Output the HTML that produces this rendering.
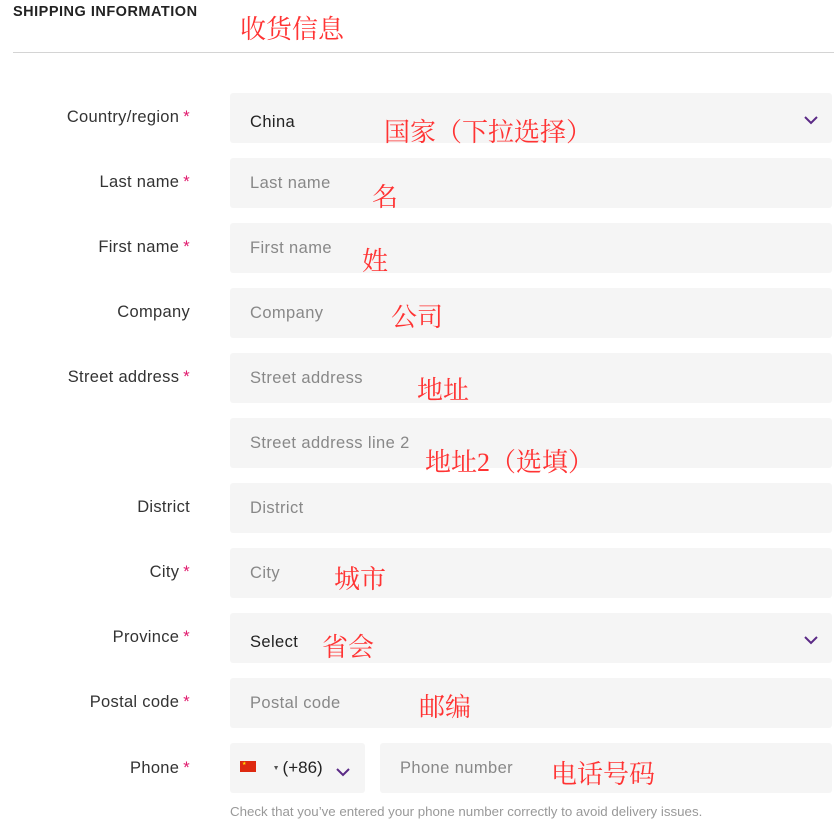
<!DOCTYPE html>
<html><head><meta charset="utf-8"><style>
*{margin:0;padding:0;box-sizing:border-box}
body{width:834px;height:830px;background:#fff;font-family:"Liberation Sans",sans-serif;position:relative;overflow:hidden;color:#333}
.h{position:absolute;left:13px;top:4px;font-size:14.5px;font-weight:bold;color:#222;letter-spacing:.5px}
.line{position:absolute;left:13px;top:52px;width:821px;height:1px;background:#d4d4d4}
.lab{position:absolute;right:644px;font-size:16.5px;color:#333;text-align:right;white-space:nowrap;letter-spacing:.3px}
.lab b{color:#e0186c;font-weight:normal;margin-left:4px}
.f{position:absolute;left:230px;width:602px;height:50px;background:#f5f5f5;border-radius:3px;font-size:16.5px;color:#888;padding-left:20px;line-height:50px;letter-spacing:.4px}
.f.v{color:#222}
.chev{position:absolute;right:13px;top:22px}
.an{position:absolute;color:#f33;font-size:26px;font-family:"Liberation Serif","Noto Serif CJK SC",serif;white-space:nowrap}
.hint{position:absolute;left:230px;top:804px;font-size:13.3px;color:#999}
</style></head><body>
<div class="h">SHIPPING INFORMATION</div>
<div class="line"></div>

<div class="lab" style="top:108px">Country/region<b>*</b></div>
<div class="f v" style="top:93px;line-height:58px">China<svg class="chev" width="16" height="10" viewBox="0 0 16 10"><path d="M2 2 L8 8 L14 2" stroke="#5b2a86" stroke-width="2" fill="none"/></svg></div>

<div class="lab" style="top:173px">Last name<b>*</b></div>
<div class="f" style="top:158px">Last name</div>

<div class="lab" style="top:238px">First name<b>*</b></div>
<div class="f" style="top:223px">First name</div>

<div class="lab" style="top:303px">Company</div>
<div class="f" style="top:288px">Company</div>

<div class="lab" style="top:368px">Street address<b>*</b></div>
<div class="f" style="top:353px">Street address</div>

<div class="f" style="top:418px">Street address line 2</div>

<div class="lab" style="top:498px">District</div>
<div class="f" style="top:483px">District</div>

<div class="lab" style="top:563px">City<b>*</b></div>
<div class="f" style="top:548px">City</div>

<div class="lab" style="top:628px">Province<b>*</b></div>
<div class="f v" style="top:613px;line-height:58px">Select<svg class="chev" width="16" height="10" viewBox="0 0 16 10"><path d="M2 2 L8 8 L14 2" stroke="#5b2a86" stroke-width="2" fill="none"/></svg></div>

<div class="lab" style="top:693px">Postal code<b>*</b></div>
<div class="f" style="top:678px">Postal code</div>

<div class="lab" style="top:759px">Phone<b>*</b></div>
<div class="f v" style="top:743px;width:135px;padding-left:10px;line-height:50px;letter-spacing:0">
<span style="display:inline-block;width:16px;height:11px;background:#de2910;vertical-align:middle;position:relative;top:-2px"><span style="position:absolute;left:2px;top:1px;color:#ffde00;font-size:5px;line-height:5px">★</span></span>
<span style="font-size:7px;color:#555;margin-left:12px;vertical-align:middle">▼</span><span style="margin-left:3px;font-size:17px">(+86)</span>
<svg style="position:absolute;left:105px;top:24px" width="16" height="10" viewBox="0 0 16 10"><path d="M2 2 L8 8 L14 2" stroke="#5b2a86" stroke-width="2" fill="none"/></svg></div>
<div class="f" style="top:743px;left:380px;width:452px">Phone number</div>
<div class="hint">Check that you’ve entered your phone number correctly to avoid delivery issues.</div>

<div class="an" style="left:240px;top:9px">收货信息</div>
<div class="an" style="left:384px;top:112px">国家（下拉选择）</div>
<div class="an" style="left:372px;top:177px">名</div>
<div class="an" style="left:362px;top:241px">姓</div>
<div class="an" style="left:391px;top:297px">公司</div>
<div class="an" style="left:417px;top:370px">地址</div>
<div class="an" style="left:425px;top:442px">地址2（选填）</div>
<div class="an" style="left:334px;top:559px">城市</div>
<div class="an" style="left:322px;top:627px">省会</div>
<div class="an" style="left:419px;top:687px">邮编</div>
<div class="an" style="left:551px;top:754px">电话号码</div>
</body></html>
